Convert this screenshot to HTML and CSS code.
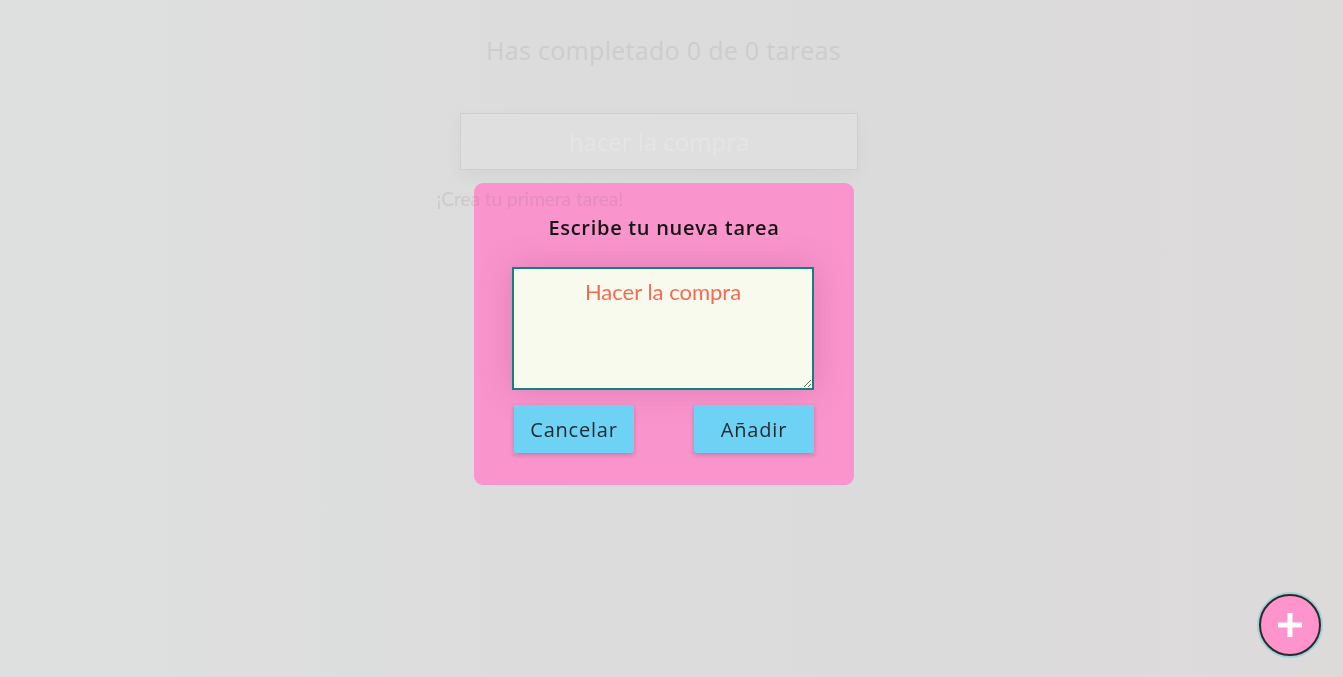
FILE: index.html
```html
<!DOCTYPE html>
<html lang="es">
<head>
<meta charset="utf-8">
<title>Tareas</title>
<link rel="stylesheet" href="styles.css">
</head>
<body>
<main class="app">
  <h1 class="counter">Has completado 0 de 0 tareas</h1>
  <input class="search" type="text" placeholder="hacer la compra">
  <div class="list">
    <p class="empty">¡Crea tu primera tarea!</p>
  </div>
</main>

<div class="overlay">
  <form class="modal">
    <h2 class="modal-title">Escribe tu nueva tarea</h2>
    <textarea class="modal-text" placeholder="Hacer la compra"></textarea>
    <div class="modal-actions">
      <button type="button" class="btn">Cancelar</button>
      <button type="button" class="btn">Añadir</button>
    </div>
  </form>
</div>

<button class="fab" type="button" aria-label="Crear tarea">
  <svg width="28" height="28" viewBox="0 0 28 28"><path d="M14 2v24M2 14h24" stroke="#fff" stroke-width="5" fill="none"/></svg>
</button>
</body>
</html>
```

FILE: styles.css
```css
html, body {
  margin: 0;
  height: 100%;
}
body {
  background: linear-gradient(90deg, #dedfdf 0%, #dcdcdc 40%, #dcdbdb 75%, #dddada 100%);
  font-family: "Open Sans", "DejaVu Sans", sans-serif;
  overflow: hidden;
}
.app {
  display: flex;
  flex-direction: column;
  align-items: center;
  padding-right: 16px;
}
.counter {
  margin: 33px 0 0;
  font-size: 25px;
  line-height: 34px;
  font-weight: 400;
  color: #cdcdcd;
  letter-spacing: 0.3px;
}
.search {
  margin: 46px 9px 0 0;
  width: 398px;
  height: 57px;
  box-sizing: border-box;
  border: 1px solid #cfcfcf;
  background: #dfdfdf;
  text-align: center;
  font-family: "Open Sans", "DejaVu Sans", sans-serif;
  font-size: 24px;
  color: #999;
  box-shadow: 0 6px 18px rgba(0,0,0,0.04);
  outline: none;
}
.search::placeholder {
  color: #e5e5e5;
  opacity: 1;
}
.list {
  width: 454px;
  margin-top: 16px;
}
.empty {
  position: relative;
  z-index: 2;
  margin: 0;
  font-family: "Lato", "Open Sans", sans-serif;
  font-size: 19px;
  line-height: 26px;
  color: rgba(140, 110, 125, 0.18);
}
.overlay {
  position: fixed;
  inset: 0;
  z-index: 1;
  display: flex;
  justify-content: center;
  align-items: flex-start;
  padding-top: 183px;
  padding-right: 15px;
}
.modal {
  width: 380px;
  box-sizing: border-box;
  padding: 32px 38px 32px;
  background: rgba(252, 140, 202, 0.9);
  border-radius: 9px;
  display: flex;
  flex-direction: column;
  align-items: stretch;
}
.modal-title {
  margin: 0;
  text-align: center;
  font-size: 20px;
  line-height: 26px;
  font-weight: 600;
  color: #141414;
  letter-spacing: 0.7px;
}
.modal-text {
  margin-top: 26px;
  height: 123px;
  width: 302px;
  box-sizing: border-box;
  border: 2px solid #0f8282;
  background: #f9faee;
  padding: 11px 10px;
  font-family: "Lato", "Open Sans", sans-serif;
  font-size: 22px;
  line-height: 24px;
  text-align: center;
  color: #333;
  box-shadow: 0 0 30px rgba(150, 60, 110, 0.25);
  outline: none;
}
.modal-text::placeholder {
  color: #f46b53;
}
.modal-actions {
  margin-top: 15px;
  display: flex;
  justify-content: space-between;
  padding: 0 0 0 2px;
  width: 300px;
}
.btn {
  width: 120px;
  height: 48px;
  border: none;
  border-radius: 2px;
  background: #6dd2f3;
  color: #1f2a30;
  font-family: "Open Sans", "DejaVu Sans", sans-serif;
  font-size: 20px;
  letter-spacing: 0.8px;
  box-shadow: 0 2px 5px rgba(0,0,0,0.2);
  cursor: pointer;
}
.fab {
  position: fixed;
  right: 22px;
  bottom: 21px;
  width: 62px;
  height: 62px;
  border-radius: 50%;
  border: 2px solid #2a2a2a;
  background: #ff93cb;
  box-shadow: 0 0 0 2px rgba(140, 205, 215, 0.7);
  display: flex;
  align-items: center;
  justify-content: center;
  padding: 0;
  cursor: pointer;
}
```
